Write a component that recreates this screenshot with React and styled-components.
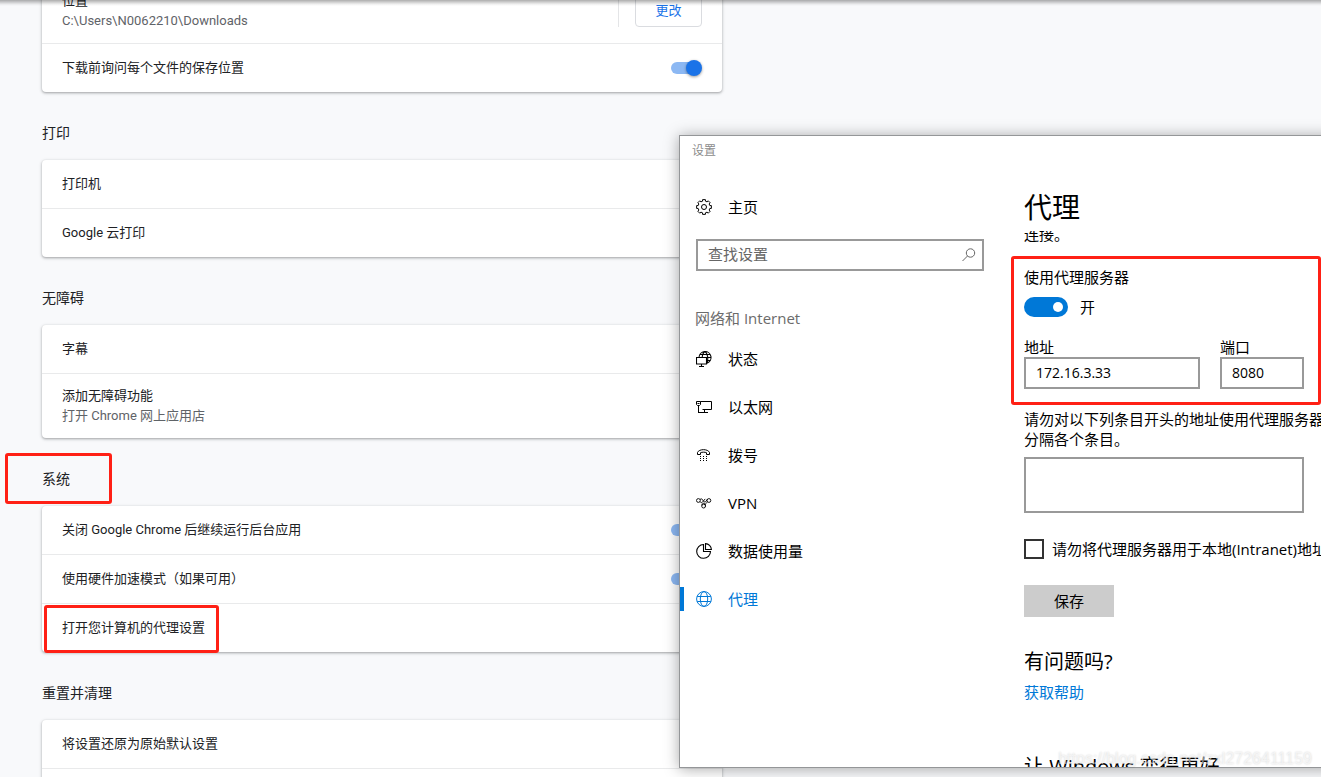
import React from 'react';
import styled, { createGlobalStyle, css } from 'styled-components';

const Global = createGlobalStyle`
  *, *::before, *::after { box-sizing: border-box; }
  html, body { margin: 0; height: 100%; overflow: hidden; }
  button, input, textarea { font: inherit; color: inherit; margin: 0; }
  h1, h2, p { margin: 0; font-weight: 400; }
`;

const RED = '#ff2015';
const BLUE = '#0078d7';

const Desktop = styled.div`
  position: relative;
  height: 100vh;
  overflow: hidden;
  background: #f8f9fb;
`;

const TopShade = styled.div`
  position: absolute;
  inset: 0 0 auto;
  height: 6px;
  background: linear-gradient(rgba(0, 0, 0, 0.32), rgba(0, 0, 0, 0.06) 70%, transparent);
`;

/* Browser settings page, scrolled part of the way down */
const SettingsPage = styled.main`
  width: 680px;
  margin: -21px 0 0 42px;
  color: #202124;
  font: 13px/20px Roboto, "Noto Sans CJK SC", sans-serif;
`;

const SectionTitle = styled.h2`
  height: 68px;
  padding-top: 14px;
  display: flex;
  align-items: center;
  font-size: 14px;
`;

const Card = styled.div`
  background: #fff;
  border-radius: 4px;
  box-shadow: 0 1px 2px rgba(60, 64, 67, 0.3), 0 1px 3px 1px rgba(60, 64, 67, 0.15);
`;

const Row = styled.div`
  display: flex;
  align-items: center;
  justify-content: space-between;
  height: ${(p) => (p.$tall ? 64 : 48)}px;
  padding: 0 20px;
  box-sizing: content-box;
  width: calc(100% - 40px);
  & + & { border-top: 1px solid #e9eaeb; }
`;

const Secondary = styled.div`
  color: #5f6368;
`;

const ChangeArea = styled.div`
  height: 32px;
  padding-left: 16px;
  border-left: 1px solid #e4e5e7;
`;

const ChangeButton = styled.button`
  height: 32px;
  width: 67px;
  border: 1px solid #dadce0;
  border-radius: 4px;
  background: #fff;
  color: #1a73e8;
`;

const ChromeSwitch = styled.input.attrs({ type: 'checkbox', role: 'switch' })`
  appearance: none;
  position: relative;
  width: 31px;
  height: 16px;
  &::before {
    content: '';
    position: absolute;
    inset: 2px 3px 2px 0;
    border-radius: 6px;
    background: #8cb8f3;
  }
  &::after {
    content: '';
    position: absolute;
    right: 0;
    top: 0;
    width: 16px;
    height: 16px;
    border-radius: 50%;
    background: #1a73e8;
    box-shadow: 0 1px 3px rgba(0, 0, 0, 0.4);
  }
`;

/* Windows settings window */
const Window = styled.section`
  position: absolute;
  left: 679px;
  top: 135px;
  width: 720px;
  height: 633px;
  display: flex;
  flex-direction: column;
  overflow: hidden;
  border: 1px solid #949698;
  background: #fff;
  box-shadow: 0 1px 14px rgba(0, 0, 0, 0.34);
  color: #000;
  font: 15px/20px "Open Sans", "Noto Sans CJK SC", sans-serif;
`;

const WindowTitle = styled.header`
  height: 32px;
  padding: 5px 12px;
  color: #8c8c8c;
  font-size: 12px;
`;

const WindowBody = styled.div`
  flex: 1;
  min-height: 0;
  display: flex;
`;

const Sidebar = styled.nav`
  flex: 0 0 344px;
  display: flex;
  flex-direction: column;
  padding-top: 15px;
`;

const NavLink = styled.a`
  display: flex;
  align-items: center;
  gap: 16px;
  height: 48px;
  padding-left: 12px;
  border-left: 4px solid transparent;
  color: inherit;
  text-decoration: none;
  ${(p) => p.$active && css`
    color: ${BLUE};
    border-image: linear-gradient(transparent 25%, ${BLUE} 25% 75%, transparent 75%) 0 0 0 4;
  `}
  svg { flex: none; width: 16px; height: 16px; }
`;

const SearchBox = styled.label`
  display: flex;
  align-items: center;
  width: 288px;
  height: 32px;
  margin: 8px 0 0 16px;
  padding: 0 5px 0 10px;
  border: 2px solid #999;
  svg { width: 16px; height: 16px; color: #666; }
`;

const SearchInput = styled.input`
  flex: 1;
  min-width: 0;
  padding: 0 0 2px;
  border: 0;
  outline: 0;
  background: none;
  &::placeholder { color: #666; opacity: 1; }
`;

const NavHeading = styled.h2`
  padding: 37px 0 7px 15px;
  color: #6b6b6b;
  font-size: 15px;
`;

const Content = styled.div`
  flex: 1;
  min-width: 0;
  display: flex;
  flex-direction: column;
  white-space: nowrap;
`;

const PageTitle = styled.h1`
  padding-top: 19px;
  font-size: 28px;
  line-height: 40px;
  height: 63px;
`;

const ScrollPane = styled.div`
  flex: 1;
  min-height: 0;
  overflow: hidden;
`;

const IntroTail = styled.p`
  margin-top: -7px;
`;

const ProxyGroup = styled.div`
  padding-top: 23px;
`;

const ToggleLine = styled.label`
  display: flex;
  align-items: center;
  gap: 12px;
  margin-top: 10px;
`;

const WinSwitch = styled.input.attrs({ type: 'checkbox', role: 'switch' })`
  appearance: none;
  display: flex;
  align-items: center;
  justify-content: flex-end;
  width: 44px;
  height: 20px;
  padding-right: 5px;
  border-radius: 10px;
  background: ${BLUE};
  &::after {
    content: '';
    width: 10px;
    height: 10px;
    border-radius: 50%;
    background: #fff;
  }
`;

const Fields = styled.div`
  display: flex;
  gap: 20px;
  margin-top: 20px;
`;

const Field = styled.label`
  display: flex;
  flex-direction: column;
  width: ${(p) => p.$width}px;
`;

const TextInput = styled.input`
  width: 100%;
  height: 32px;
  padding: 0 10px 2px;
  border: 2px solid #999;
  border-radius: 0;
  outline: 0;
  background: #fff;
  font-size: 14px;
`;

const Exceptions = styled.label`
  display: block;
  margin-top: 20px;
`;

const TextArea = styled.textarea`
  display: block;
  width: 280px;
  height: 56px;
  margin-top: 8px;
  border: 2px solid #999;
  border-radius: 0;
  resize: none;
`;

const CheckLine = styled.label`
  display: flex;
  align-items: center;
  gap: 8px;
  margin-top: 26px;
`;

const CheckBox = styled.input.attrs({ type: 'checkbox' })`
  appearance: none;
  flex: none;
  width: 20px;
  height: 20px;
  border: 2px solid #333;
  background: #fff;
`;

const SaveButton = styled.button`
  width: 90px;
  height: 32px;
  margin-top: 26px;
  border: 0;
  background: #ccc;
`;

const HelpTitle = styled.h2`
  margin-top: ${(p) => p.$gap}px;
  font-size: 20px;
  line-height: 30px;
`;

const HelpLink = styled.a`
  display: block;
  margin-top: 5px;
  color: ${BLUE};
  text-decoration: none;
`;

/* Red annotation frames drawn over both windows */
const Frame = styled.div`
  position: absolute;
  left: ${(p) => p.$x}px;
  top: ${(p) => p.$y}px;
  width: ${(p) => p.$w}px;
  height: ${(p) => p.$h}px;
  border: 3px solid ${RED};
  border-radius: 3px;
  pointer-events: none;
`;

const Watermark = styled.div`
  position: absolute;
  right: 9px;
  bottom: 8px;
  color: rgba(255, 255, 255, 0.6);
  text-shadow: 0 0 2px rgba(0, 0, 0, 0.18);
  font: 16px/20px "Liberation Sans", sans-serif;
`;

const Icon = ({ children, w = 1 }) => (
  <svg viewBox="0 0 16 16" fill="none" stroke="currentColor" strokeWidth={w} aria-hidden="true">
    {children}
  </svg>
);

const gearPath = Array.from({ length: 8 }, (_, i) => {
  const pt = (deg, r) => {
    const a = ((deg + i * 45) * Math.PI) / 180;
    return `${(8 + r * Math.cos(a)).toFixed(2)} ${(8 + r * Math.sin(a)).toFixed(2)}`;
  };
  return `${i ? 'L' : 'M'}${pt(-11, 7.5)} L${pt(11, 7.5)} L${pt(14, 6)} L${pt(31, 6)}`;
}).join(' ') + 'Z';

const GearIcon = () => (
  <Icon><path d={gearPath} /><circle cx="8" cy="8" r="2.5" /></Icon>
);
const StatusIcon = () => (
  <Icon w={1.1}>
    <path d="M3 6.500A6 6 0 1 1 11 12.200M3.700 3.500h10.600M6.200 6.500h8.800M10.500 9.500h3.800M6.200 7C6.200 4 7.300 1.600 9 .5C11.700 2.500 12.500 7.500 11 12" />
    <path d="M.5 6.500h10v6.500H.5zM5.500 13v2.500M3 15.500h5" />
  </Icon>
);
const EthernetIcon = () => (
  <Icon>
    <path d="M4.500 2.500h11v8h-9M8.500 10.500v3M2.500 6.500v7M2 13.500h10M.5 2.500h4v3l-1 1h-2l-1-1zM1.500 4.500h2" />
  </Icon>
);
const PhoneIcon = () => (
  <Icon>
    <path d="M1.500 7.500V5.500C3 1.700 12 1.700 13.500 5.500v2h-3V5.700C9 5 6 5 4.500 5.700v1.800z" />
    <path strokeDasharray="1 2" d="M4 9.500h7M4 11.500h7M7 13.500h4" />
    <path d="M4 13.500h1" />
  </Icon>
);
const VpnIcon = () => (
  <Icon w={0.9}>
    <circle cx="2.400" cy="5.500" r="1.900" /><circle cx="12.900" cy="5.500" r="1.900" /><circle cx="7.600" cy="11.100" r="1.900" />
    <path d="M4 4.500C5.300 3.300 6.400 4 6.900 5.200S8.600 7.600 9.600 6.800L11.600 4M4 6.600C4.600 7.500 5.300 8 6.200 7.400L9.200 3.900M5.900 10.500C5.600 9 7 8 8 8.300S9.800 10 9.400 11.600M11.400 6.700C10.600 8.200 9.700 8.200 9.200 9.700" />
  </Icon>
);
const DataIcon = () => (
  <Icon w={1.1}>
    <path d="M7.500 1.500A6.900 6.900 0 1 0 14.500 8.500H7.500z" /><path d="M9.500 .6A6.200 6.200 0 0 1 15.400 6.500H9.500z" />
  </Icon>
);
const GlobeIcon = () => (
  <Icon>
    <circle cx="8" cy="8" r="7.400" /><ellipse cx="8" cy="8" rx="3.700" ry="7.400" />
    <path d="M1.200 5.500h13.600M1.200 10.500h13.600" />
  </Icon>
);
const SearchIcon = () => (
  <Icon><circle cx="9.500" cy="6" r="4.200" /><path d="M6.500 9L1.500 14" /></Icon>
);

const navItems = [
  ['状态', StatusIcon],
  ['以太网', EthernetIcon],
  ['拨号', PhoneIcon],
  ['VPN', VpnIcon],
  ['数据使用量', DataIcon],
  ['代理', GlobeIcon],
];

export default function App() {
  return (
    <>
      <Global />
      <Desktop>
        <SettingsPage>
          <Card>
            <Row $tall>
              <div>
                <div>位置</div>
                <Secondary>C:\Users\N0062210\Downloads</Secondary>
              </div>
              <ChangeArea><ChangeButton>更改</ChangeButton></ChangeArea>
            </Row>
            <Row>
              <label htmlFor="ask">下载前询问每个文件的保存位置</label>
              <ChromeSwitch id="ask" defaultChecked />
            </Row>
          </Card>
          <SectionTitle>打印</SectionTitle>
          <Card>
            <Row>打印机</Row>
            <Row>Google 云打印</Row>
          </Card>
          <SectionTitle>无障碍</SectionTitle>
          <Card>
            <Row>字幕</Row>
            <Row $tall>
              <div>
                <div>添加无障碍功能</div>
                <Secondary>打开 Chrome 网上应用店</Secondary>
              </div>
            </Row>
          </Card>
          <SectionTitle>系统</SectionTitle>
          <Card>
            <Row>
              <label htmlFor="background">关闭 Google Chrome 后继续运行后台应用</label>
              <ChromeSwitch id="background" defaultChecked />
            </Row>
            <Row>
              <label htmlFor="hardware">使用硬件加速模式（如果可用）</label>
              <ChromeSwitch id="hardware" defaultChecked />
            </Row>
            <Row>打开您计算机的代理设置</Row>
          </Card>
          <SectionTitle>重置并清理</SectionTitle>
          <Card>
            <Row>将设置还原为原始默认设置</Row>
            <Row />
          </Card>
        </SettingsPage>
        <TopShade />

        <Window>
          <WindowTitle>设置</WindowTitle>
          <WindowBody>
            <Sidebar>
              <NavLink href="#home"><GearIcon />主页</NavLink>
              <SearchBox>
                <SearchInput type="text" placeholder="查找设置" aria-label="查找设置" />
                <SearchIcon />
              </SearchBox>
              <NavHeading>网络和 Internet</NavHeading>
              {navItems.map(([name, Glyph]) => (
                <NavLink key={name} href={`#${name}`} $active={Glyph === GlobeIcon}>
                  <Glyph />{name}
                </NavLink>
              ))}
            </Sidebar>
            <Content>
              <PageTitle>代理</PageTitle>
              <ScrollPane>
                <IntroTail>连接。</IntroTail>
                <ProxyGroup>
                  <p>使用代理服务器</p>
                  <ToggleLine><WinSwitch defaultChecked />开</ToggleLine>
                  <Fields>
                    <Field $width={176}>地址<TextInput type="text" defaultValue="172.16.3.33" /></Field>
                    <Field $width={84}>端口<TextInput type="text" defaultValue="8080" /></Field>
                  </Fields>
                </ProxyGroup>
                <Exceptions>
                  请勿对以下列条目开头的地址使用代理服务器<br />分隔各个条目。
                  <TextArea />
                </Exceptions>
                <CheckLine><CheckBox />请勿将代理服务器用于本地(Intranet)地址</CheckLine>
                <SaveButton>保存</SaveButton>
                <HelpTitle $gap={30}>有问题吗?</HelpTitle>
                <HelpLink href="#help">获取帮助</HelpLink>
                <HelpTitle $gap={50}>让 Windows 变得更好</HelpTitle>
              </ScrollPane>
            </Content>
          </WindowBody>
        </Window>

        <Frame $x={5} $y={453} $w={107} $h={51} />
        <Frame $x={44} $y={605} $w={175} $h={48} />
        <Frame $x={1011} $y={256} $w={310} $h={149} />
        <Watermark>https://blog.csdn.net/zxl2726411159</Watermark>
      </Desktop>
    </>
  );
}
